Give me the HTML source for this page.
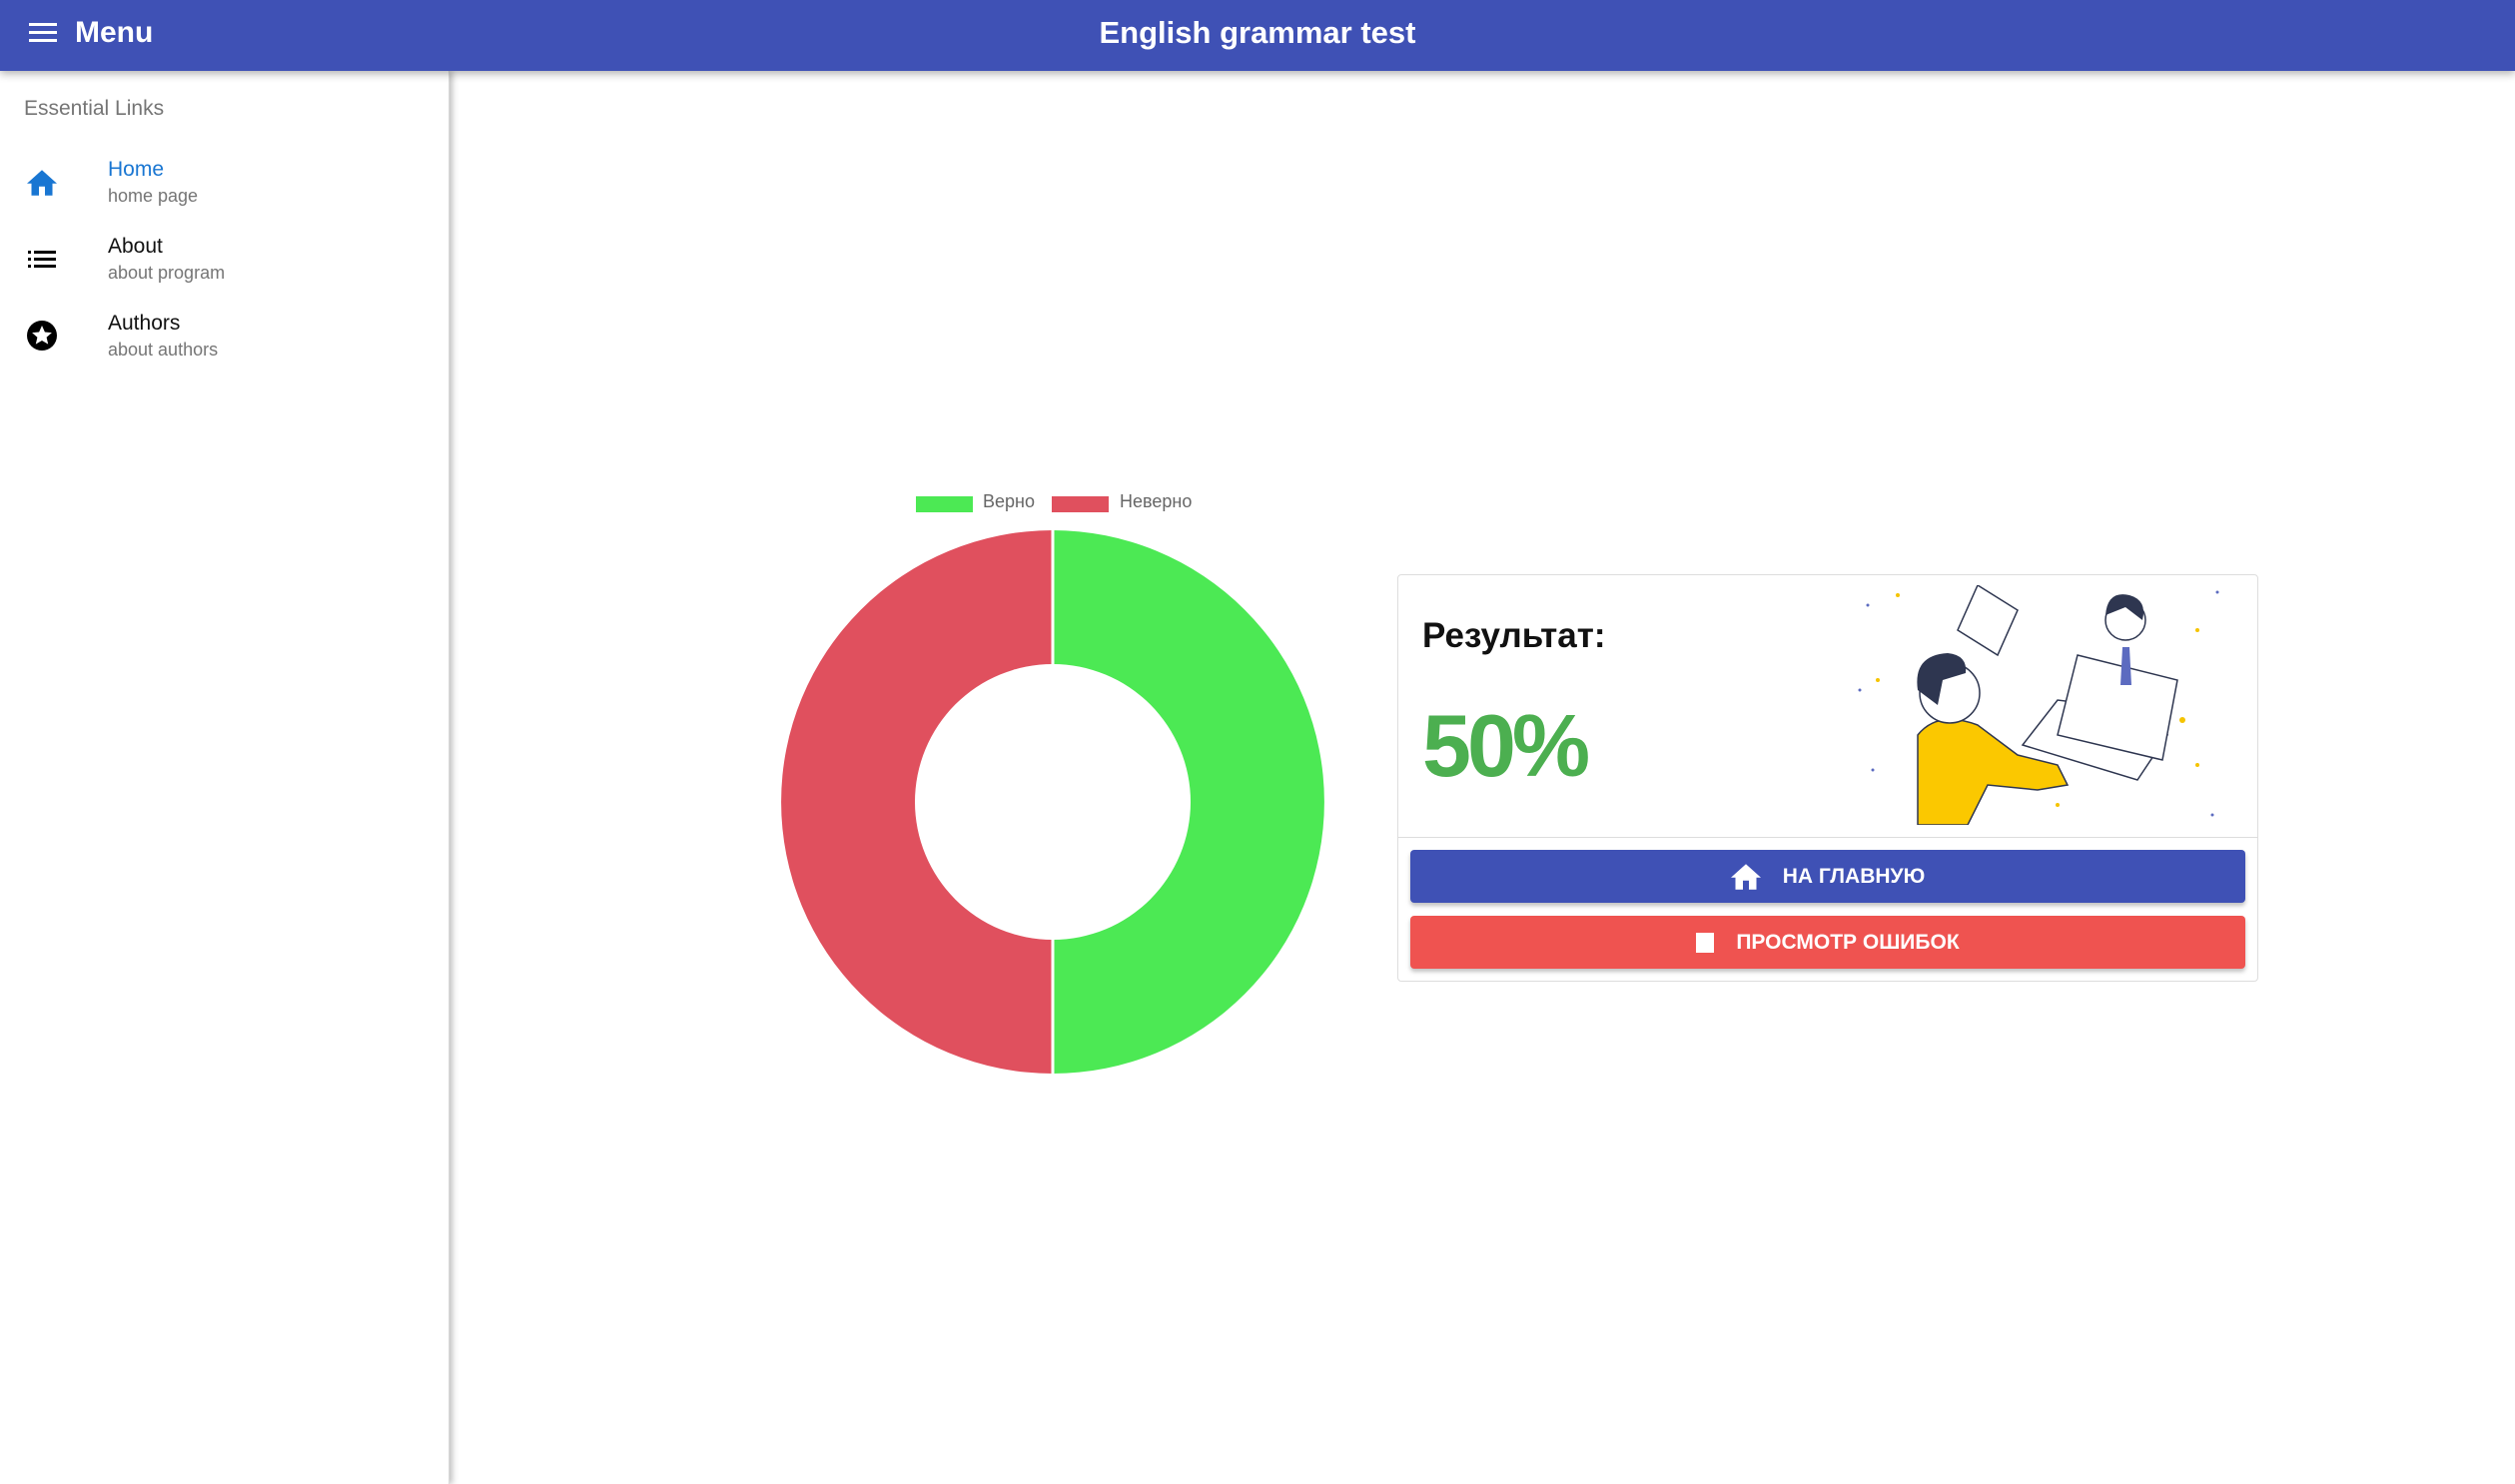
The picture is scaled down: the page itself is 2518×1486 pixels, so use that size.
<!DOCTYPE html>
<html><head><meta charset="utf-8"><style>
*{margin:0;padding:0;box-sizing:border-box}
body{width:2518px;height:1486px;background:#fff;font-family:"Liberation Sans","Noto Sans CJK SC",sans-serif;position:relative;overflow:hidden}
.hdr{position:absolute;left:0;top:0;width:2518px;height:71px;background:#3f51b5;box-shadow:0 3px 8px rgba(0,0,0,.3);z-index:3}
.side{position:absolute;left:0;top:71px;width:450px;height:1415px;background:#fff;box-shadow:3px 0 6px rgba(0,0,0,.25);border-right:1px solid #ddd;z-index:2}
.t{position:absolute;white-space:nowrap}
.btn{position:absolute;left:1412px;width:836px;height:53px;border-radius:4px;box-shadow:0 3px 4px rgba(0,0,0,.25);color:#fff;font-weight:bold;font-size:21px;display:flex;align-items:center;justify-content:center;gap:22px}
</style></head><body>
<div class="hdr">
 <svg style="position:absolute;left:29px;top:22px" width="28" height="22"><rect y="1" width="28" height="3" fill="#fff"/><rect y="9" width="28" height="3" fill="#fff"/><rect y="17" width="28" height="3" fill="#fff"/></svg>
 <div class="t" style="left:75px;top:16px;color:#fff;font-size:30px;font-weight:bold">Menu</div>
 <div class="t" style="left:0;width:2518px;text-align:center;top:15px;color:#fff;font-size:31px;font-weight:bold">English grammar test</div>
</div>
<div class="side">
 <div class="t" style="left:24px;top:26px;font-size:21px;color:#757575">Essential Links</div>
 <svg style="position:absolute;left:27px;top:99px" width="30" height="26" viewBox="2 3 20 17"><path d="M10 20v-6h4v6h5v-8h3L12 3 2 12h3v8z" fill="#1976d2"/></svg>
 <div class="t" style="left:108px;top:87px;font-size:21px;color:#1976d2">Home</div>
 <div class="t" style="left:108px;top:115px;font-size:18px;color:#757575">home page</div>
 <svg style="position:absolute;left:28px;top:180px" width="28" height="18"><rect x="0" y="0" width="3" height="3"/><rect x="6" y="0" width="22" height="3"/><rect x="0" y="7" width="3" height="3"/><rect x="6" y="7" width="22" height="3"/><rect x="0" y="14" width="3" height="3"/><rect x="6" y="14" width="22" height="3"/></svg>
 <div class="t" style="left:108px;top:164px;font-size:21px;color:#111">About</div>
 <div class="t" style="left:108px;top:192px;font-size:18px;color:#757575">about program</div>
 <svg style="position:absolute;left:26px;top:249px" width="32" height="32" viewBox="0 0 32 32"><circle cx="16" cy="16" r="15" fill="#000"/><path d="M16 6l2.9 6.5 7 .6-5.3 4.6 1.6 6.9L16 21l-6.2 3.6 1.6-6.9L6.1 13.1l7-.6z" fill="#fff"/></svg>
 <div class="t" style="left:108px;top:241px;font-size:21px;color:#111">Authors</div>
 <div class="t" style="left:108px;top:269px;font-size:18px;color:#757575">about authors</div>
</div>
<div style="position:absolute;left:917px;top:497px;width:57px;height:16px;background:#4ce954"></div>
<div class="t" style="left:984px;top:492px;font-size:18px;color:#666">Верно</div>
<div style="position:absolute;left:1053px;top:497px;width:57px;height:16px;background:#e0505e"></div>
<div class="t" style="left:1121px;top:492px;font-size:18px;color:#666">Неверно</div>
<svg style="position:absolute;left:776px;top:525px" width="556" height="556" viewBox="0 0 556 556">
 <path d="M278 6A272 272 0 0 1 278 550L278 416A138 138 0 0 0 278 140Z" fill="#4ce954"/>
 <path d="M278 6A272 272 0 0 0 278 550L278 416A138 138 0 0 1 278 140Z" fill="#e0505e"/>
 <line x1="278" y1="0" x2="278" y2="556" stroke="#fff" stroke-width="3"/>
</svg>
<div style="position:absolute;left:1399px;top:575px;width:862px;height:408px;border:1px solid #ddd;border-radius:4px;background:#fff"></div>
<div style="position:absolute;left:1400px;top:838px;width:860px;height:1px;background:#ddd"></div>
<div class="t" style="left:1424px;top:617px;font-size:35px;font-weight:bold;color:#111">Результат:</div>
<div class="t" style="left:1424px;top:696px;font-size:88px;font-weight:bold;color:#4caf50;letter-spacing:-4px">50%</div>
<svg style="position:absolute;left:1860px;top:586px" width="370" height="240" viewBox="0 0 370 240">
 <g fill="#f5c400"><circle cx="40" cy="10" r="2"/><circle cx="110" cy="45" r="2"/><circle cx="20" cy="95" r="2"/><circle cx="340" cy="45" r="2"/><circle cx="200" cy="220" r="2"/><circle cx="340" cy="180" r="2"/><circle cx="325" cy="135" r="3"/></g>
 <g fill="#5c6bc0"><circle cx="10" cy="20" r="1.5"/><circle cx="360" cy="7" r="1.5"/><circle cx="2" cy="105" r="1.5"/><circle cx="15" cy="185" r="1.5"/><circle cx="355" cy="230" r="1.5"/><circle cx="235" cy="245" r="1.5"/></g>
 <path d="M60 240L60 150Q80 125 120 140L160 170 200 180 210 200 180 205 130 200 110 240Z" fill="#fbc800" stroke="#2e3650" stroke-width="1.5"/>
 <circle cx="92" cy="108" r="30" fill="#fff" stroke="#2e3650" stroke-width="1.5"/>
 <path d="M60 105Q55 70 90 68Q110 70 108 88L85 95 80 120Z" fill="#2e3650"/>
 <path d="M165 160L280 195 310 150 240 120 200 115Z" fill="#fff" stroke="#2e3650" stroke-width="1.5"/>
 <path d="M220 70L320 95 305 175 200 150Z" fill="#fff" stroke="#2e3650" stroke-width="1.5"/>
 <path d="M120 0L160 25 140 70 100 45Z" fill="#fff" stroke="#2e3650" stroke-width="1.5"/>
 <circle cx="268" cy="35" r="20" fill="#fff" stroke="#2e3650" stroke-width="1.5"/>
 <path d="M248 30Q250 5 272 10Q290 15 285 35L268 22Z" fill="#2e3650"/>
 <path d="M265 62L272 62 274 100 263 100Z" fill="#5c6bc0"/>
</svg>
<div class="btn" style="top:851px;background:#3f51b5">
 <svg width="30" height="28" viewBox="2 3 20 17"><path d="M10 20v-6h4v6h5v-8h3L12 3 2 12h3v8z" fill="#fff"/></svg><span>НА ГЛАВНУЮ</span></div>
<div class="btn" style="top:917px;background:#ef5350">
 <div style="width:18px;height:20px;background:#fff"></div><span>ПРОСМОТР ОШИБОК</span></div>
</body></html>
